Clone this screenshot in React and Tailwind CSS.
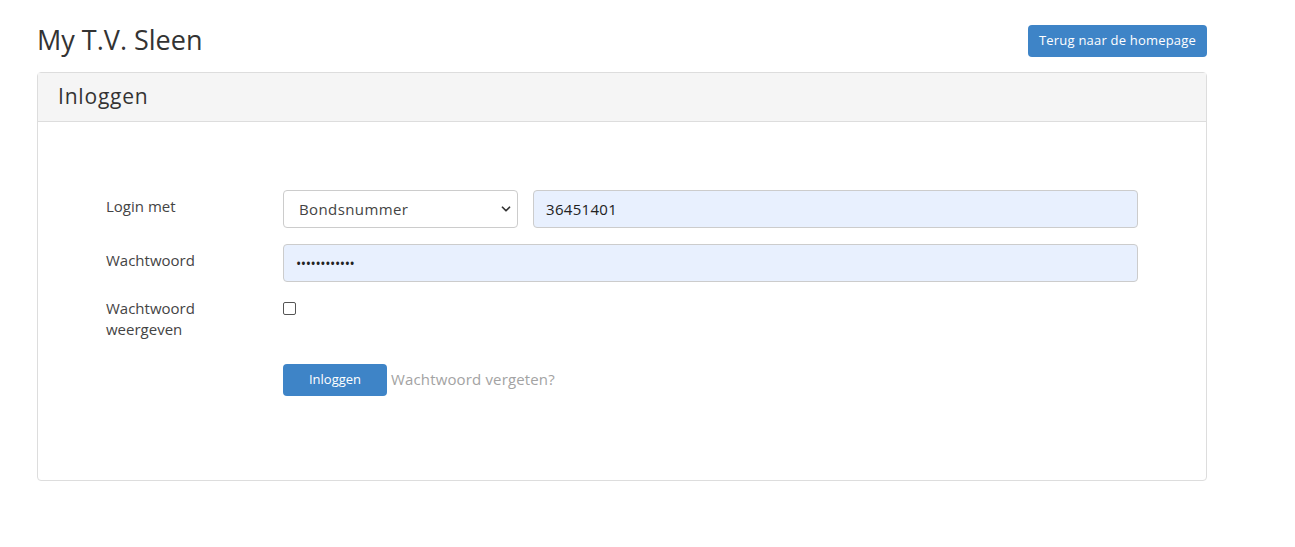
import { ChevronDown } from "lucide-react";

const font = { fontFamily: '"Open Sans", "Liberation Sans", sans-serif' };

export default function App() {
  return (
    <div className="min-h-[547px] bg-white text-[#333]" style={font}>
      <div className="ml-[37px] w-[1170px]">
        <div className="flex h-[72px] items-start justify-between pt-[25px]">
          <h1 className="mt-[1px] text-[27px] leading-[27px] text-[#333]">My T.V. Sleen</h1>
          <button className="h-[32px] w-[179px] rounded-[4px] bg-[#3e84c7] text-[13px] tracking-[0.2px] text-white">
            Terug naar de homepage
          </button>
        </div>

        <div className="h-[409px] rounded-[4px] border border-[#ddd]">
          <div className="flex h-[49px] items-center border-b border-[#ddd] bg-[#f5f5f5] px-[20px]">
            <h2 className="text-[21px] tracking-[0.8px] text-[#333]">Inloggen</h2>
          </div>

          <div className="pl-[68px] pt-[68px]">
            <div className="flex h-[38px] items-start">
              <label className="w-[177px] pt-[6px] text-[15px] leading-[21px] text-[#444]">Login met</label>
              <div className="relative flex h-[38px] w-[235px] items-center rounded-[4px] border border-[#ccc] bg-white pl-[15px] text-[15px] tracking-[0.4px] text-[#444]">
                Bondsnummer
                <ChevronDown className="absolute right-[4px] h-[14px] w-[14px] text-[#333]" strokeWidth={3} />
              </div>
              <div className="ml-[15px] flex h-[38px] w-[605px] items-center rounded-[4px] border border-[#ccc] bg-[#e8f0fe] pl-[12px] text-[15px] tracking-[0.3px] text-[#222]">
                36451401
              </div>
            </div>

            <div className="mt-[16px] flex h-[38px] items-start">
              <label className="w-[177px] pt-[6px] text-[15px] leading-[21px] text-[#444]">Wachtwoord</label>
              <div className="flex h-[38px] w-[855px] items-center rounded-[4px] border border-[#ccc] bg-[#e8f0fe] pl-[12px] text-[14px] tracking-[-0.4px] text-[#222]">
                ••••••••••••
              </div>
            </div>

            <div className="mt-[16px] flex">
              <label className="w-[177px] text-[15px] leading-[21px] text-[#444]">
                Wachtwoord
                <br />
                weergeven
              </label>
              <div className="mt-[4px] h-[13px] w-[13px] rounded-[2px] border border-[#555] bg-white" />
            </div>

            <div className="ml-[177px] mt-[24px] flex items-center">
              <button className="h-[32px] w-[104px] rounded-[4px] bg-[#3e84c7] text-[13px] text-white">Inloggen</button>
              <span className="mb-[2px] ml-[4px] text-[15px] tracking-[0.15px] text-[#a3a3a3]">Wachtwoord vergeten?</span>
            </div>
          </div>
        </div>
      </div>
    </div>
  );
}
